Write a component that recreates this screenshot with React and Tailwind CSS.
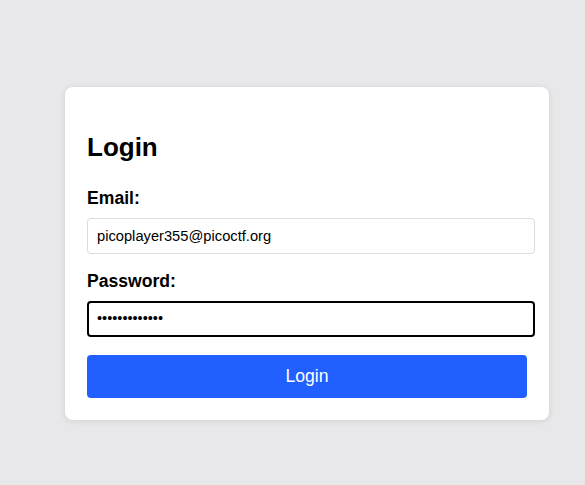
export default function App() {
  return (
    <div
      className="min-h-[485px] w-full bg-[#e8e8ea] pt-[87px] pl-[65px]"
      style={{ fontFamily: '"Liberation Sans", Arial, sans-serif' }}
    >
      <div className="w-[484px] h-[333px] rounded-lg bg-white px-[22px] pt-[45px] shadow-[0_1px_6px_rgba(0,0,0,0.1)]">
        <h2 className="text-[26px] font-bold leading-[30px] text-black">Login</h2>
        <label className="mt-[26px] block text-[17.6px] font-bold leading-[20px] text-black">Email:</label>
        <div className="mt-[10px] flex h-[36px] w-[448px] items-center rounded-[4px] border border-[#dcdcdc] pl-[9px] text-[14.7px] text-black">
          picoplayer355@picoctf.org
        </div>
        <label className="mt-[17px] block text-[17.6px] font-bold leading-[20px] text-black">Password:</label>
        <div className="mt-[10px] flex h-[36px] w-[448px] items-center rounded-[4px] border-2 border-black pl-[8px] text-[14.5px] text-black">
          •••••••••••••
        </div>
        <button className="mt-[18px] flex h-[43px] w-[440px] items-center justify-center rounded-[4px] bg-[#215fff] text-[17.6px] text-white">
          Login
        </button>
      </div>
    </div>
  );
}
